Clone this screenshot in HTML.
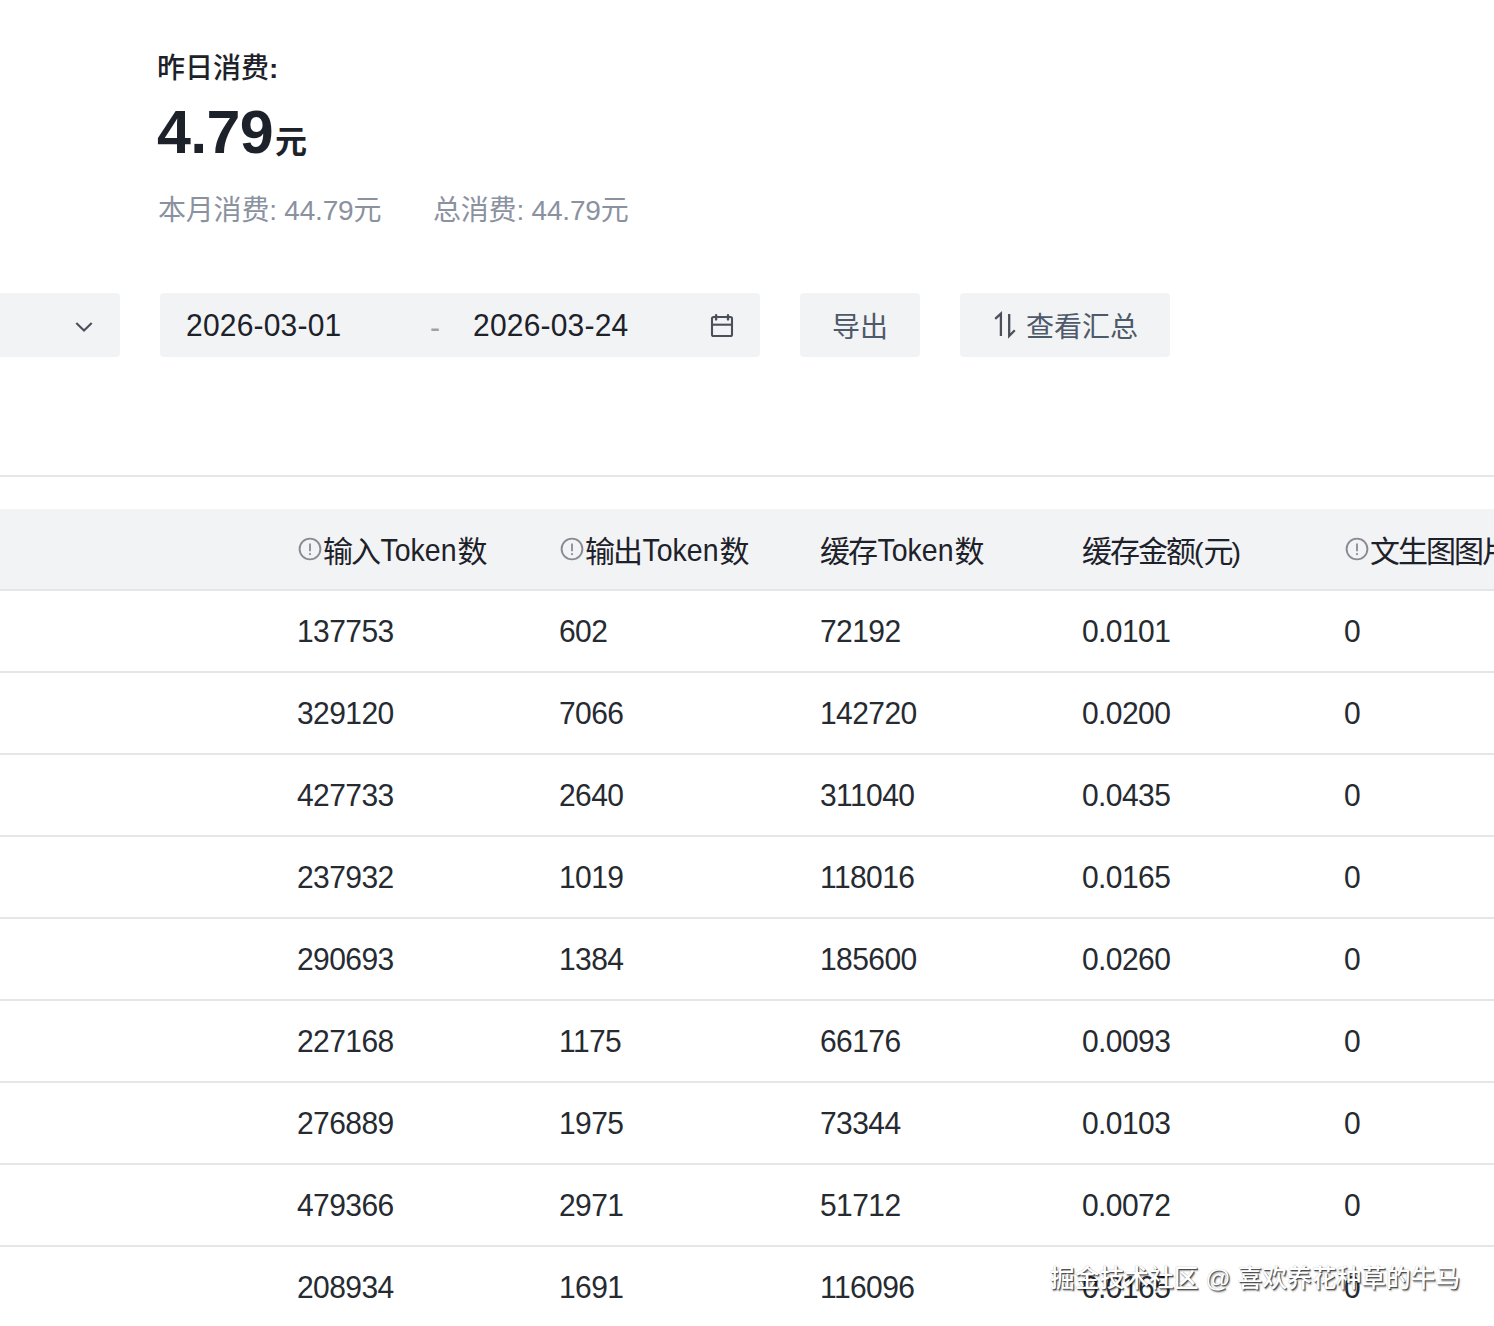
<!DOCTYPE html>
<html lang="zh-CN">
<head>
<meta charset="utf-8">
<title>消费明细</title>
<style>
html,body{margin:0;padding:0;background:#fff;}
body{width:1494px;height:1326px;position:relative;overflow:hidden;font-family:"Liberation Sans","Noto Sans CJK SC",sans-serif;color:#1d2129;}
.abs{position:absolute;white-space:nowrap;line-height:1;}
.t1{left:157px;top:55px;font-size:28px;font-weight:500;color:#1d2129;}
.big{left:157px;top:102px;font-size:61px;font-weight:700;color:#1d2129;letter-spacing:-.7px;}
.big span{font-size:32px;letter-spacing:0;margin-left:2px;}
.sub{letter-spacing:-.2px;top:197px;font-size:28px;color:#8a919f;}
.box{position:absolute;background:#f2f3f5;border-radius:4px;top:293px;height:64px;}
.date{font-size:30px;top:310px;color:#1d2129;letter-spacing:.2px;transform:scaleY(1.075);}
.btn{font-size:28px;color:#4e5969;top:314px;}
.hline{position:absolute;left:0;width:1494px;height:2px;background:#e5e6e8;}
.thead{position:absolute;left:0;top:509px;width:1494px;height:81px;background:#f2f3f5;}
.th{font-size:30px;top:537px;color:#1d2129;letter-spacing:-2px;}
.th i{font-style:normal;font-size:28.5px;letter-spacing:0;}
.th i.t{margin:0 1px 0 1.5px;display:inline-block;transform:scaleY(1.09);position:relative;top:-2.4px;}
.td{font-size:30px;letter-spacing:-.58px;color:#262a31;transform:scaleY(1.055);}
.ico{position:absolute;width:24px;height:24px;top:537px;}
.wm{left:1050px;top:1267px;font-size:24.75px;font-weight:500;color:#fff;text-shadow:1px 1px 0 rgba(0,0,0,.55),1.5px 1.5px 1.5px rgba(0,0,0,.38),0 0 1px rgba(0,0,0,.3);}
</style>
</head>
<body>
<div class="abs t1">昨日消费<b>:</b></div>
<div class="abs big">4.79<span>元</span></div>
<div class="abs sub" style="left:158px">本月消费: 44.79元</div>
<div class="abs sub" style="left:433px">总消费: 44.79元</div>

<div class="box" style="left:-8px;width:128px"></div>
<svg class="abs" style="left:64px;top:310px" width="40" height="30" viewBox="64 310 40 30"><path d="M76.3 322.9 L84 330.6 L91.7 322.9" fill="none" stroke="#4a4f5a" stroke-width="2.1"/></svg>
<div class="box" style="left:160px;width:600px"></div>
<div class="abs date" style="left:186px">2026-03-01</div>
<div class="abs date" style="left:430px;top:311.5px;color:#9da1a8">-</div>
<div class="abs date" style="left:473px">2026-03-24</div>
<svg class="abs" style="left:700px;top:306px" width="44" height="40" viewBox="700 306 44 40"><g fill="none" stroke="#4a4f5a" stroke-width="2.1"><rect x="712" y="317" width="20" height="19" rx="1.6"/><path d="M712 324.7H732"/><path d="M716.1 315.2V319.4M728 315.2V319.4" stroke-width="2.4" stroke-linecap="round"/></g></svg>
<div class="box" style="left:800px;width:120px"></div>
<div class="abs btn" style="left:832px">导出</div>
<div class="box" style="left:960px;width:210px"></div>
<svg class="abs" style="left:985px;top:306px" width="40" height="40" viewBox="985 306 40 40"><g fill="none" stroke="#4a4f5a" stroke-width="2.3"><path d="M995.2 318.9L1000.9 313.6V336"/><path d="M1009.2 314V336L1014.8 330.3"/></g></svg>
<div class="abs btn" style="left:1026px">查看汇总</div>

<div class="hline" style="top:475px"></div>
<div class="thead"></div>
<div class="hline" style="top:589px"></div>
<div id="tbl">
<svg class="ico" style="left:298px" viewBox="0 0 24 24"><circle cx="12" cy="12" r="10.4" fill="none" stroke="#888b92" stroke-width="1.9"/><path d="M12 6.4V14.3" stroke="#888b92" stroke-width="1.8" fill="none"/><circle cx="12" cy="17.1" r="1.1" fill="#888b92"/></svg>
<div class="abs th" style="left:323px">输入<i class="t">Token</i>数</div>
<svg class="ico" style="left:560px" viewBox="0 0 24 24"><circle cx="12" cy="12" r="10.4" fill="none" stroke="#888b92" stroke-width="1.9"/><path d="M12 6.4V14.3" stroke="#888b92" stroke-width="1.8" fill="none"/><circle cx="12" cy="17.1" r="1.1" fill="#888b92"/></svg>
<div class="abs th" style="left:585px">输出<i class="t">Token</i>数</div>
<div class="abs th" style="left:820px">缓存<i class="t">Token</i>数</div>
<div class="abs th" style="left:1082px">缓存金额<i>(</i>元<i>)</i></div>
<svg class="ico" style="left:1345px" viewBox="0 0 24 24"><circle cx="12" cy="12" r="10.4" fill="none" stroke="#888b92" stroke-width="1.9"/><path d="M12 6.4V14.3" stroke="#888b92" stroke-width="1.8" fill="none"/><circle cx="12" cy="17.1" r="1.1" fill="#888b92"/></svg>
<div class="abs th" style="left:1370px">文生图图片数</div>
<div class="abs td" style="left:297px;top:616px">137753</div>
<div class="abs td" style="left:559px;top:616px">602</div>
<div class="abs td" style="left:820px;top:616px">72192</div>
<div class="abs td" style="left:1082px;top:616px">0.0101</div>
<div class="abs td" style="left:1344px;top:616px">0</div>
<div class="hline" style="top:671px"></div>
<div class="abs td" style="left:297px;top:698px">329120</div>
<div class="abs td" style="left:559px;top:698px">7066</div>
<div class="abs td" style="left:820px;top:698px">142720</div>
<div class="abs td" style="left:1082px;top:698px">0.0200</div>
<div class="abs td" style="left:1344px;top:698px">0</div>
<div class="hline" style="top:753px"></div>
<div class="abs td" style="left:297px;top:780px">427733</div>
<div class="abs td" style="left:559px;top:780px">2640</div>
<div class="abs td" style="left:820px;top:780px">311040</div>
<div class="abs td" style="left:1082px;top:780px">0.0435</div>
<div class="abs td" style="left:1344px;top:780px">0</div>
<div class="hline" style="top:835px"></div>
<div class="abs td" style="left:297px;top:862px">237932</div>
<div class="abs td" style="left:559px;top:862px">1019</div>
<div class="abs td" style="left:820px;top:862px">118016</div>
<div class="abs td" style="left:1082px;top:862px">0.0165</div>
<div class="abs td" style="left:1344px;top:862px">0</div>
<div class="hline" style="top:917px"></div>
<div class="abs td" style="left:297px;top:944px">290693</div>
<div class="abs td" style="left:559px;top:944px">1384</div>
<div class="abs td" style="left:820px;top:944px">185600</div>
<div class="abs td" style="left:1082px;top:944px">0.0260</div>
<div class="abs td" style="left:1344px;top:944px">0</div>
<div class="hline" style="top:999px"></div>
<div class="abs td" style="left:297px;top:1026px">227168</div>
<div class="abs td" style="left:559px;top:1026px">1175</div>
<div class="abs td" style="left:820px;top:1026px">66176</div>
<div class="abs td" style="left:1082px;top:1026px">0.0093</div>
<div class="abs td" style="left:1344px;top:1026px">0</div>
<div class="hline" style="top:1081px"></div>
<div class="abs td" style="left:297px;top:1108px">276889</div>
<div class="abs td" style="left:559px;top:1108px">1975</div>
<div class="abs td" style="left:820px;top:1108px">73344</div>
<div class="abs td" style="left:1082px;top:1108px">0.0103</div>
<div class="abs td" style="left:1344px;top:1108px">0</div>
<div class="hline" style="top:1163px"></div>
<div class="abs td" style="left:297px;top:1190px">479366</div>
<div class="abs td" style="left:559px;top:1190px">2971</div>
<div class="abs td" style="left:820px;top:1190px">51712</div>
<div class="abs td" style="left:1082px;top:1190px">0.0072</div>
<div class="abs td" style="left:1344px;top:1190px">0</div>
<div class="hline" style="top:1245px"></div>
<div class="abs td" style="left:297px;top:1272px">208934</div>
<div class="abs td" style="left:559px;top:1272px">1691</div>
<div class="abs td" style="left:820px;top:1272px">116096</div>
<div class="abs td" style="left:1082px;top:1272px">0.0165</div>
<div class="abs td" style="left:1344px;top:1272px">0</div>
</div><!--e-->

<div class="abs wm">掘金技术社区 @ 喜欢养花种草的牛马</div>
</body>
</html>
